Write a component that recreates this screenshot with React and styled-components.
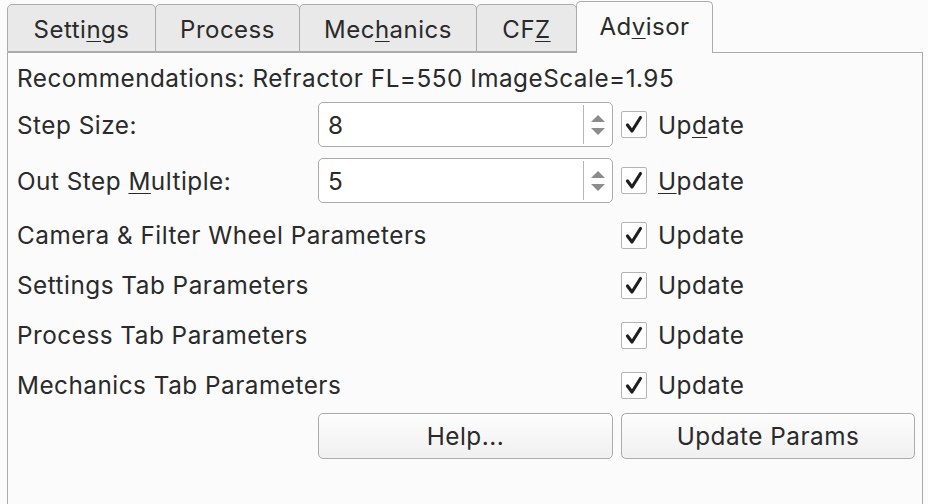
import React from "react";
import styled, { createGlobalStyle } from "styled-components";

const Global = createGlobalStyle`
  html, body { margin: 0; padding: 0; background: #fbfbfb; }
  body { font-family: Inter, "Noto Sans", "Liberation Sans", sans-serif; color: #2a2a2a; letter-spacing: 0.5px; }
`;

const Page = styled.div`
  width: 928px;
  height: 504px;
  padding: 0 5px 0 7px;
  box-sizing: border-box;
  display: flex;
  flex-direction: column;
  overflow: hidden;
`;

const TabBar = styled.div`
  display: flex;
  align-items: flex-end;
  height: 52px;
  position: relative;
  z-index: 1;
`;

const Tab = styled.div`
  box-sizing: border-box;
  height: ${(p) => (p.$active ? "52px" : "48px")};
  width: ${(p) => p.$w}px;
  margin-left: ${(p) => (p.$first ? 0 : "-1px")};
  border: 1px solid #ababab;
  border-bottom: ${(p) => (p.$active ? "none" : "1px solid #ababab")};
  border-radius: 5px 5px 0 0;
  background: ${(p) => (p.$active ? "#fbfbfb" : "#e9e9e9")};
  display: flex;
  align-items: center;
  justify-content: center;
  font-size: 24px;
  padding-top: ${(p) => (p.$active ? "0" : "2px")};
  padding-bottom: ${(p) => (p.$active ? "2px" : "0")};
  margin-bottom: ${(p) => (p.$active ? "-1px" : "0")};
  color: #2a2a2a;
`;

const U = styled.span`
  text-decoration: underline;
  text-decoration-thickness: 1px;
  text-underline-offset: 3px;
`;

const Pane = styled.div`
  flex: 1;
  border: 1px solid #ababab;
  border-bottom: none;
  background: #fbfbfb;
  padding: 0 0 0 9px;
  display: flex;
  flex-direction: column;
`;

const Row = styled.div`
  display: grid;
  grid-template-columns: 293px 295px 1fr;
  column-gap: 8px;
  align-items: center;
  height: ${(p) => p.$h}px;
  margin-top: ${(p) => p.$mt || 0}px;
  font-size: 24.3px;
`;

const FullText = styled.div`
  grid-column: 1 / -1;
  white-space: nowrap;
`;

const Label = styled.div`
  white-space: nowrap;
`;

const Spin = styled.div`
  box-sizing: border-box;
  height: 45px;
  border: 1px solid #ababab;
  border-radius: 5px;
  background: #ffffff;
  display: flex;
  overflow: hidden;
`;

const SpinValue = styled.div`
  flex: 1;
  display: flex;
  align-items: center;
  padding-left: 9px;
`;

const SpinArrows = styled.div`
  width: 28px;
  border-left: 1px solid #b5b5b5;
  margin: 2px 0;
  display: flex;
  flex-direction: column;
  align-items: center;
  justify-content: center;
  gap: 4px;
`;

const CheckWrap = styled.div`
  display: flex;
  align-items: center;
  gap: 11px;
  white-space: nowrap;
`;

const Box = styled.div`
  box-sizing: border-box;
  width: 26px;
  height: 27px;
  border: 1px solid #b3b3b3;
  border-radius: 2px;
  background: #ffffff;
  display: flex;
  align-items: center;
  justify-content: center;
`;

const Button = styled.div`
  box-sizing: border-box;
  height: 46px;
  border: 1px solid #ababab;
  border-radius: 5px;
  background: linear-gradient(#fdfdfd, #f0f0f0);
  display: flex;
  align-items: center;
  justify-content: center;
`;

const Arrow = ({ down }) => (
  <svg width="16" height="9" viewBox="0 0 16 9">
    <path d={down ? "M1 1 L15 1 L8 8 Z" : "M1 8 L15 8 L8 1 Z"} fill="#8c8c8c" />
  </svg>
);

const Check = () => (
  <svg width="18" height="19" viewBox="0 0 18 19">
    <path d="M2.5 10 L7 16 L15.5 2.5" fill="none" stroke="#1e1e1e" strokeWidth="3.2" strokeLinecap="round" strokeLinejoin="round" />
  </svg>
);

const SpinBox = ({ value }) => (
  <Spin>
    <SpinValue>{value}</SpinValue>
    <SpinArrows>
      <Arrow />
      <Arrow down />
    </SpinArrows>
  </Spin>
);

const CheckUpdate = ({ children }) => (
  <CheckWrap>
    <Box>
      <Check />
    </Box>
    <span>{children}</span>
  </CheckWrap>
);

export default function App() {
  return (
    <>
      <Global />
      <Page>
        <TabBar>
          <Tab $first $w={149}>Setti<U>n</U>gs</Tab>
          <Tab $w={145}>Process</Tab>
          <Tab $w={178}>Mec<U>h</U>anics</Tab>
          <Tab $w={101}>CF<U>Z</U></Tab>
          <Tab $active $w={137}>Ad<U>v</U>isor</Tab>
        </TabBar>
        <Pane>
          <Row $h={49}>
            <FullText>Recommendations: Refractor FL=550 ImageScale=1.95</FullText>
          </Row>
          <Row $h={45}>
            <Label>Step Size:</Label>
            <SpinBox value="8" />
            <CheckUpdate>Up<U>d</U>ate</CheckUpdate>
          </Row>
          <Row $h={45} $mt={11}>
            <Label>Out Step <U>M</U>ultiple:</Label>
            <SpinBox value="5" />
            <CheckUpdate><U>U</U>pdate</CheckUpdate>
          </Row>
          <Row $h={50} $mt={7}>
            <Label>Camera &amp; Filter Wheel Parameters</Label>
            <div />
            <CheckUpdate>Update</CheckUpdate>
          </Row>
          <Row $h={50}>
            <Label>Settings Tab Parameters</Label>
            <div />
            <CheckUpdate>Update</CheckUpdate>
          </Row>
          <Row $h={50}>
            <Label>Process Tab Parameters</Label>
            <div />
            <CheckUpdate>Update</CheckUpdate>
          </Row>
          <Row $h={50}>
            <Label>Mechanics Tab Parameters</Label>
            <div />
            <CheckUpdate>Update</CheckUpdate>
          </Row>
          <Row $h={46} $mt={3}>
            <div />
            <Button>Help...</Button>
            <Button style={{ width: 294 }}>Update Params</Button>
          </Row>
        </Pane>
      </Page>
    </>
  );
}
